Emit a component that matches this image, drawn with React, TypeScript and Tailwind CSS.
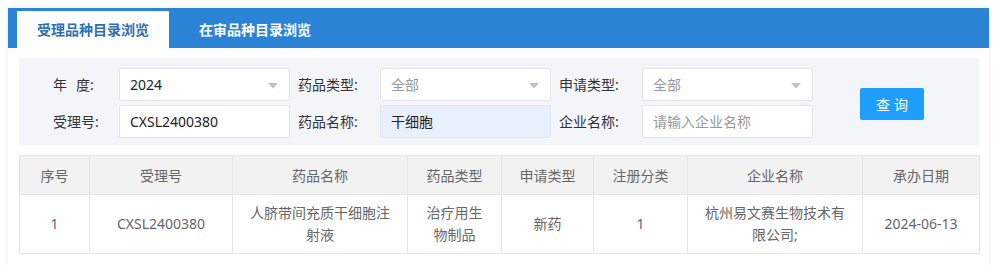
import React from 'react';

const FONT = 'font-["Noto_Sans","Noto_Sans_CJK_SC",sans-serif]';

const COLS = [
  { title: '序号', w: 70 },
  { title: '受理号', w: 143 },
  { title: '药品名称', w: 175 },
  { title: '药品类型', w: 94 },
  { title: '申请类型', w: 92 },
  { title: '注册分类', w: 94 },
  { title: '企业名称', w: 175 },
  { title: '承办日期', w: 117 },
];

const ROWS = [
  ['1', 'CXSL2400380', '人脐带间充质干细胞注射液', '治疗用生物制品', '新药', '1', '杭州易文赛生物技术有限公司;', '2024-06-13'],
];

function Caret() {
  return (
    <svg width="10" height="6" viewBox="0 0 10 6" className="absolute right-[11px] top-[14px]">
      <path d="M0 0 L10 0 L5 5.5 Z" fill="#c2c2c2" />
    </svg>
  );
}

function Select({ value, placeholder }: { value?: string; placeholder?: string }) {
  return (
    <div className="relative w-[171px] h-[33px] bg-white border border-[#e6e6e6] rounded-[2px] pl-[10px] flex items-center text-[14px]">
      {value ? <span className="text-[#222]">{value}</span> : <span className="text-[#999]">{placeholder}</span>}
      <Caret />
    </div>
  );
}

function Input({ value, placeholder, filled }: { value?: string; placeholder?: string; filled?: boolean }) {
  return (
    <div
      className={
        'w-[171px] h-[33px] border rounded-[2px] pl-[10px] flex items-center text-[14px] ' +
        (filled ? 'bg-[#e8f0fe] border-[#e2e8f2]' : 'bg-white border-[#e6e6e6]')
      }
    >
      {value ? <span className="text-[#222]">{value}</span> : <span className="text-[#999]">{placeholder}</span>}
    </div>
  );
}

function Label({ children, className }: { children: React.ReactNode; className: string }) {
  return <div className={className + ' text-[14px] text-[#333] whitespace-pre flex items-center'}>{children}</div>;
}

export default function App() {
  return (
    <div className={`${FONT} bg-white w-[999px] h-[265px] overflow-hidden`}>
      <div className="ml-[8px] mt-[8px] w-[981px] h-[300px] bg-white shadow-[0_0_4px_rgba(40,60,120,0.12)]">
        {/* tabs */}
        <div className="h-[40px] bg-[#2b83d5] flex items-end pl-[9px] gap-[10px]">
          <div className="w-[152px] h-[37px] bg-white flex items-center justify-center text-[14px] font-bold text-[#2f6db5]">
            受理品种目录浏览
          </div>
          <div className="w-[152px] h-[37px] flex items-center justify-center text-[14px] font-bold text-white">
            在审品种目录浏览
          </div>
        </div>

        <div className="px-[11px] pt-[10px]">
          {/* filters */}
          <div className="w-[960px] bg-[#f3f5f9] pl-[34px] pt-[10px] pb-[7px] flex items-center">
            <div className="flex flex-col gap-[4px]">
              <div className="flex items-center">
                <Label className="w-[66px]">
                  年<span className="inline-block w-[9px]" />度:
                </Label>
                <Select value="2024" />
                <Label className="w-[90px] pl-[8px]">药品类型:</Label>
                <Select placeholder="全部" />
                <Label className="w-[91px] pl-[8px]">申请类型:</Label>
                <Select placeholder="全部" />
              </div>
              <div className="flex items-center">
                <Label className="w-[66px]">受理号:</Label>
                <Input value="CXSL2400380" />
                <Label className="w-[90px] pl-[8px]">药品名称:</Label>
                <Input value="干细胞" filled />
                <Label className="w-[91px] pl-[8px]">企业名称:</Label>
                <Input placeholder="请输入企业名称" />
              </div>
            </div>
            <button className="ml-[47px] mt-[2px] w-[64px] h-[32px] bg-[#1e9fff] rounded-[2px] text-white text-[14px] tracking-[4px] pl-[4px]">
              查询
            </button>
          </div>

          {/* table */}
          <table className="mt-[10px] w-[960px] border-collapse table-fixed text-[14px] text-[#666]">
            <colgroup>
              {COLS.map(c => (
                <col key={c.title} style={{ width: c.w }} />
              ))}
            </colgroup>
            <thead>
              <tr className="bg-[#f2f2f2] h-[39px]">
                {COLS.map(c => (
                  <th key={c.title} className="border border-[#e6e6e6] font-normal px-[15px] text-center">
                    {c.title}
                  </th>
                ))}
              </tr>
            </thead>
            <tbody>
              {ROWS.map((r, i) => (
                <tr key={i} className="h-[59px]">
                  {r.map((cell, j) => (
                    <td key={j} className="border border-[#e6e6e6] px-[15px] text-center leading-[22px] break-all">
                      {cell}
                    </td>
                  ))}
                </tr>
              ))}
            </tbody>
          </table>
        </div>
      </div>
    </div>
  );
}
